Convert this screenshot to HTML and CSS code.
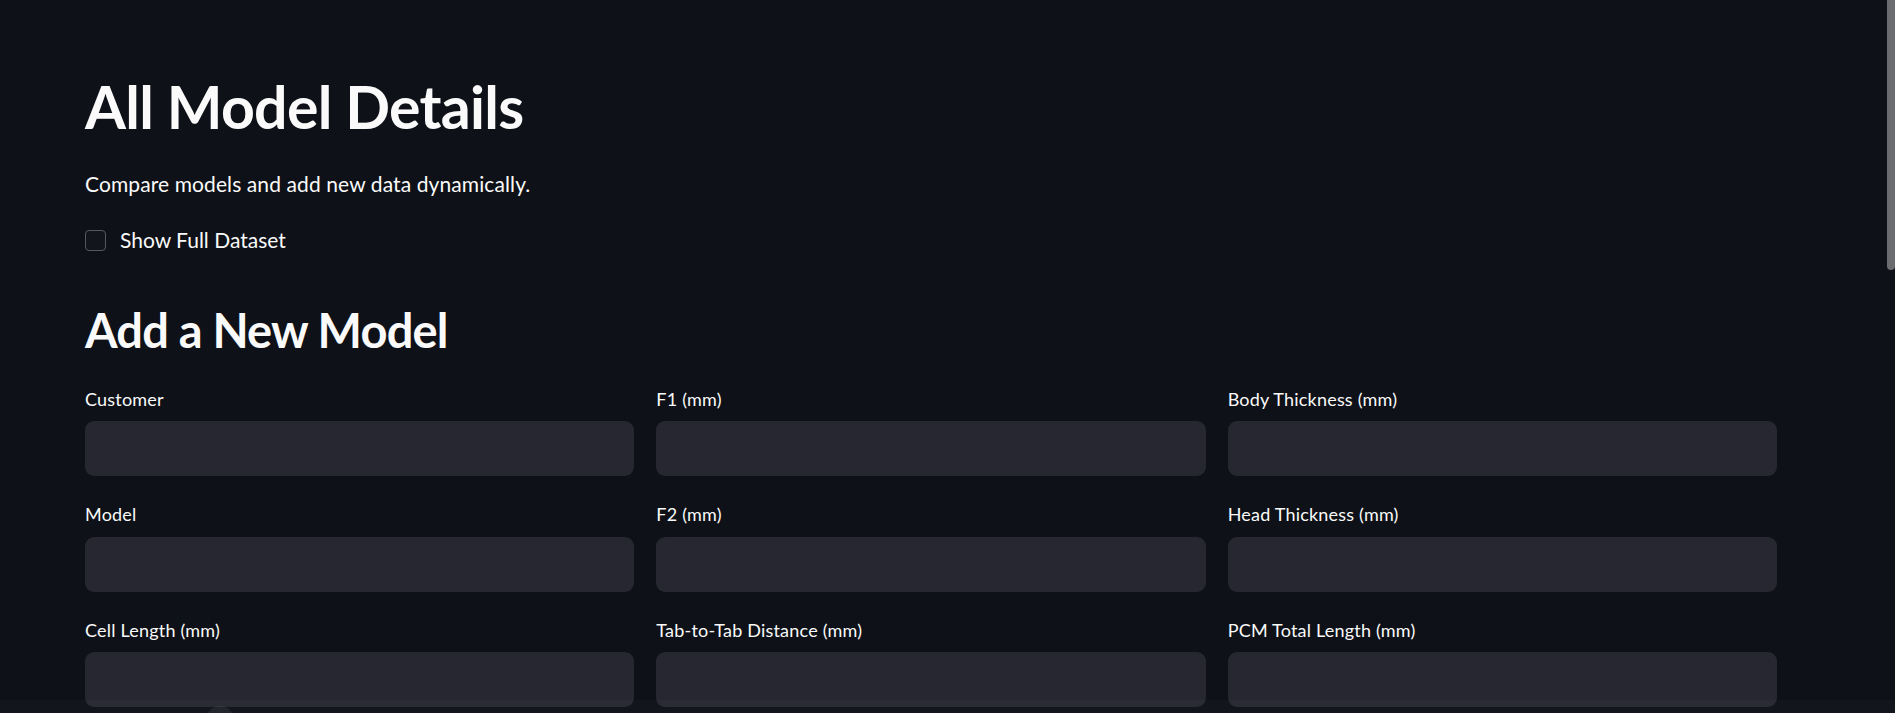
FILE: index.html
```html
<!DOCTYPE html>
<html lang="en">
<head>
<meta charset="utf-8">
<title>All Model Details</title>
<link rel="stylesheet" href="styles.css">
</head>
<body>
<main class="app">
  <div class="block">
    <h1 class="title">All Model Details</h1>
    <p class="lead">Compare models and add new data dynamically.</p>
    <label class="check">
      <input type="checkbox" class="check-input">
      <span class="check-box"></span>
      <span class="check-label">Show Full Dataset</span>
    </label>
    <h2 class="section">Add a New Model</h2>
    <div class="columns">
      <div class="column">
        <div class="field"><div class="field-label">Customer</div><input class="field-input" type="text"></div>
        <div class="field"><div class="field-label">Model</div><input class="field-input" type="text"></div>
        <div class="field"><div class="field-label">Cell Length (mm)</div><input class="field-input" type="text"></div>
      </div>
      <div class="column">
        <div class="field"><div class="field-label">F1 (mm)</div><input class="field-input" type="text"></div>
        <div class="field"><div class="field-label">F2 (mm)</div><input class="field-input" type="text"></div>
        <div class="field"><div class="field-label">Tab-to-Tab Distance (mm)</div><input class="field-input" type="text"></div>
      </div>
      <div class="column">
        <div class="field"><div class="field-label">Body Thickness (mm)</div><input class="field-input" type="text"></div>
        <div class="field"><div class="field-label">Head Thickness (mm)</div><input class="field-input" type="text"></div>
        <div class="field"><div class="field-label">PCM Total Length (mm)</div><input class="field-input" type="text"></div>
      </div>
    </div>
  </div>
</main>
<div class="scroll-thumb"></div>
<div class="bottom-bar"><span class="bottom-dot"></span></div>
</body>
</html>
```
FILE: styles.css
```css
html, body {
  margin: 0;
  height: 100%;
  overflow: hidden;
  background: #0e1117;
}

body {
  font-family: Lato, "Noto Sans", sans-serif;
  color: #fafafa;
}

.block {
  margin-left: 85px;
  width: 1692px;
  padding-top: 71px;
  display: flex;
  flex-direction: column;
}

.title {
  margin: 0;
  font-size: 59px;
  line-height: 72px;
  font-weight: 700;
  letter-spacing: -0.7px;
}

.lead {
  margin: 25px 0 0;
  font-size: 21px;
  line-height: 32px;
  letter-spacing: 0.1px;
}

.check {
  margin-top: 24px;
  height: 32px;
  display: flex;
  align-items: center;
  gap: 14px;
}

.check-input {
  display: none;
}

.check-box {
  width: 19px;
  height: 19px;
  margin-top: 1px;
  border: 1px solid #56585f;
  border-radius: 4px;
  background: #12151c;
}

.check-label {
  font-size: 21px;
  line-height: 32px;
}

.section {
  margin: 45px 0 0;
  font-size: 47px;
  line-height: 58.8px;
  font-weight: 700;
  letter-spacing: -0.8px;
}

.columns {
  margin-top: 28px;
  display: flex;
  gap: 22px;
}

.column {
  flex: 1;
  display: flex;
  flex-direction: column;
  gap: 27px;
}

.field-label {
  font-size: 18px;
  line-height: 22px;
  letter-spacing: 0.2px;
  margin-bottom: 11.5px;
}

.field-input {
  display: block;
  box-sizing: border-box;
  width: 100%;
  height: 55px;
  border: 0;
  border-radius: 9px;
  background: #262730;
  padding: 0 15px;
  color: #fafafa;
  font: 21px Lato, sans-serif;
  outline: none;
}

.scroll-thumb {
  position: fixed;
  top: 0;
  right: 0;
  width: 8px;
  height: 270px;
  background: #6b6c70;
  border-radius: 0 0 4px 4px;
}

.bottom-bar {
  position: fixed;
  left: 0;
  right: 0;
  bottom: 0;
  height: 13px;
  background: rgba(255, 255, 255, 0.018);
  overflow: hidden;
}

.bottom-dot {
  position: absolute;
  left: 206px;
  top: 6px;
  width: 28px;
  height: 28px;
  border-radius: 50%;
  background: rgba(255, 255, 255, 0.07);
}
```
